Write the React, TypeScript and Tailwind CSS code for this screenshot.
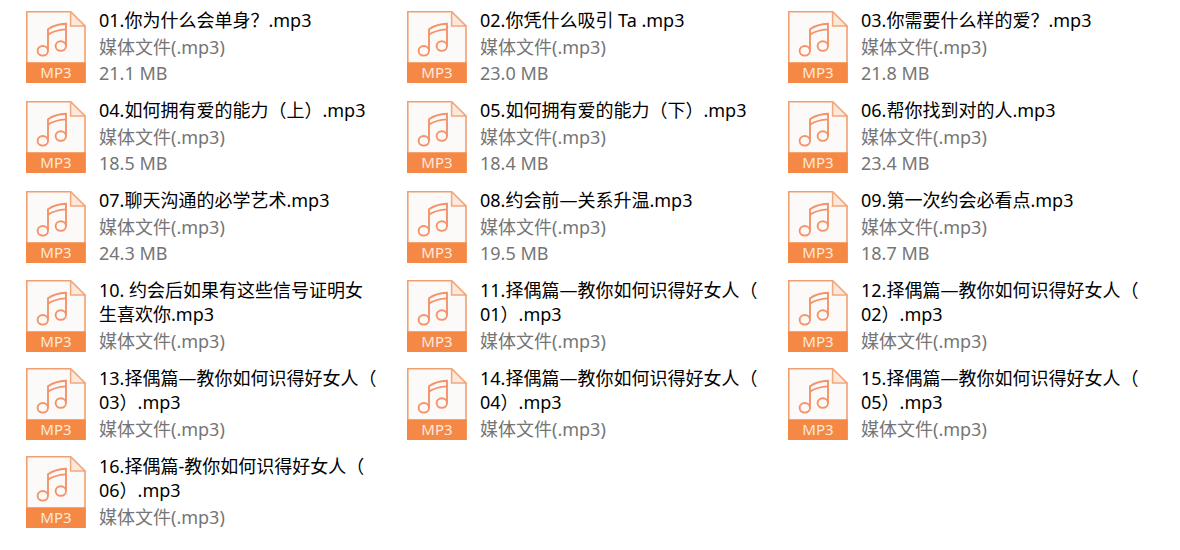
type MediaFile = {
  name: string;
  size?: string;
};

const files: MediaFile[] = [
  { name: '01.你为什么会单身？.mp3', size: '21.1 MB' },
  { name: '02.你凭什么吸引 Ta .mp3', size: '23.0 MB' },
  { name: '03.你需要什么样的爱？.mp3', size: '21.8 MB' },
  { name: '04.如何拥有爱的能力（上）.mp3', size: '18.5 MB' },
  { name: '05.如何拥有爱的能力（下）.mp3', size: '18.4 MB' },
  { name: '06.帮你找到对的人.mp3', size: '23.4 MB' },
  { name: '07.聊天沟通的必学艺术.mp3', size: '24.3 MB' },
  { name: '08.约会前—关系升温.mp3', size: '19.5 MB' },
  { name: '09.第一次约会必看点.mp3', size: '18.7 MB' },
  // Long names carry their own line break, the size line is dropped for them.
  { name: '10. 约会后如果有这些信号证明女\n生喜欢你.mp3' },
  { name: '11.择偶篇—教你如何识得好女人（\n01）.mp3' },
  { name: '12.择偶篇—教你如何识得好女人（\n02）.mp3' },
  { name: '13.择偶篇—教你如何识得好女人（\n03）.mp3' },
  { name: '14.择偶篇—教你如何识得好女人（\n04）.mp3' },
  { name: '15.择偶篇—教你如何识得好女人（\n05）.mp3' },
  { name: '16.择偶篇-教你如何识得好女人（\n06）.mp3' },
];

function Mp3Icon() {
  return (
    <svg width="60" height="72" viewBox="0 0 60 72" className="shrink-0" aria-hidden="true">
      <path d="M.8 .8H44.6L59 15V71.3H.8Z" fill="#fcfaf8" stroke="#f0a070" strokeWidth="1.6" />
      <path d="M44.6 .8V15H59Z" fill="#fce9dc" stroke="#f2a77c" strokeWidth="1.5" />
      <path d="M0 51.3H59.7V72H0Z" fill="#f58845" />
      <g fill="none" stroke="#f4936a" strokeWidth="1.9">
        <ellipse cx="16.8" cy="39.8" rx="5.2" ry="4.8" />
        <ellipse cx="34.8" cy="35.1" rx="5.2" ry="4.8" />
        <path d="M22 39.8V18.2Q29 13.4 40 12.8V35.1" />
        <path d="M22 23.6Q29 19 40 18.4" />
      </g>
      <text
        x="30"
        y="67"
        textAnchor="middle"
        fill="#fdeadd"
        className="font-['Noto_Sans',sans-serif] text-[15px]"
      >
        MP3
      </text>
    </svg>
  );
}

function FileItem({ file }: { file: MediaFile }) {
  return (
    <li className="flex items-center gap-[13px]">
      <Mp3Icon />
      <div className="min-w-0 whitespace-pre">
        <p className="mb-0.5 leading-6 text-black">{file.name}</p>
        <p className="leading-[26px] text-[#757575]">媒体文件(.mp3)</p>
        {file.size && <p className="leading-[26px] text-[#757575]">{file.size}</p>}
      </div>
    </li>
  );
}

export default function App() {
  return (
    <main className="min-h-screen bg-white pt-2 pr-[11px] pl-[26px] font-['Noto_Sans','Noto_Sans_CJK_SC',sans-serif] text-lg">
      <ul className="grid grid-cols-3 gap-y-3">
        {files.map((file) => (
          <FileItem key={file.name} file={file} />
        ))}
      </ul>
    </main>
  );
}
